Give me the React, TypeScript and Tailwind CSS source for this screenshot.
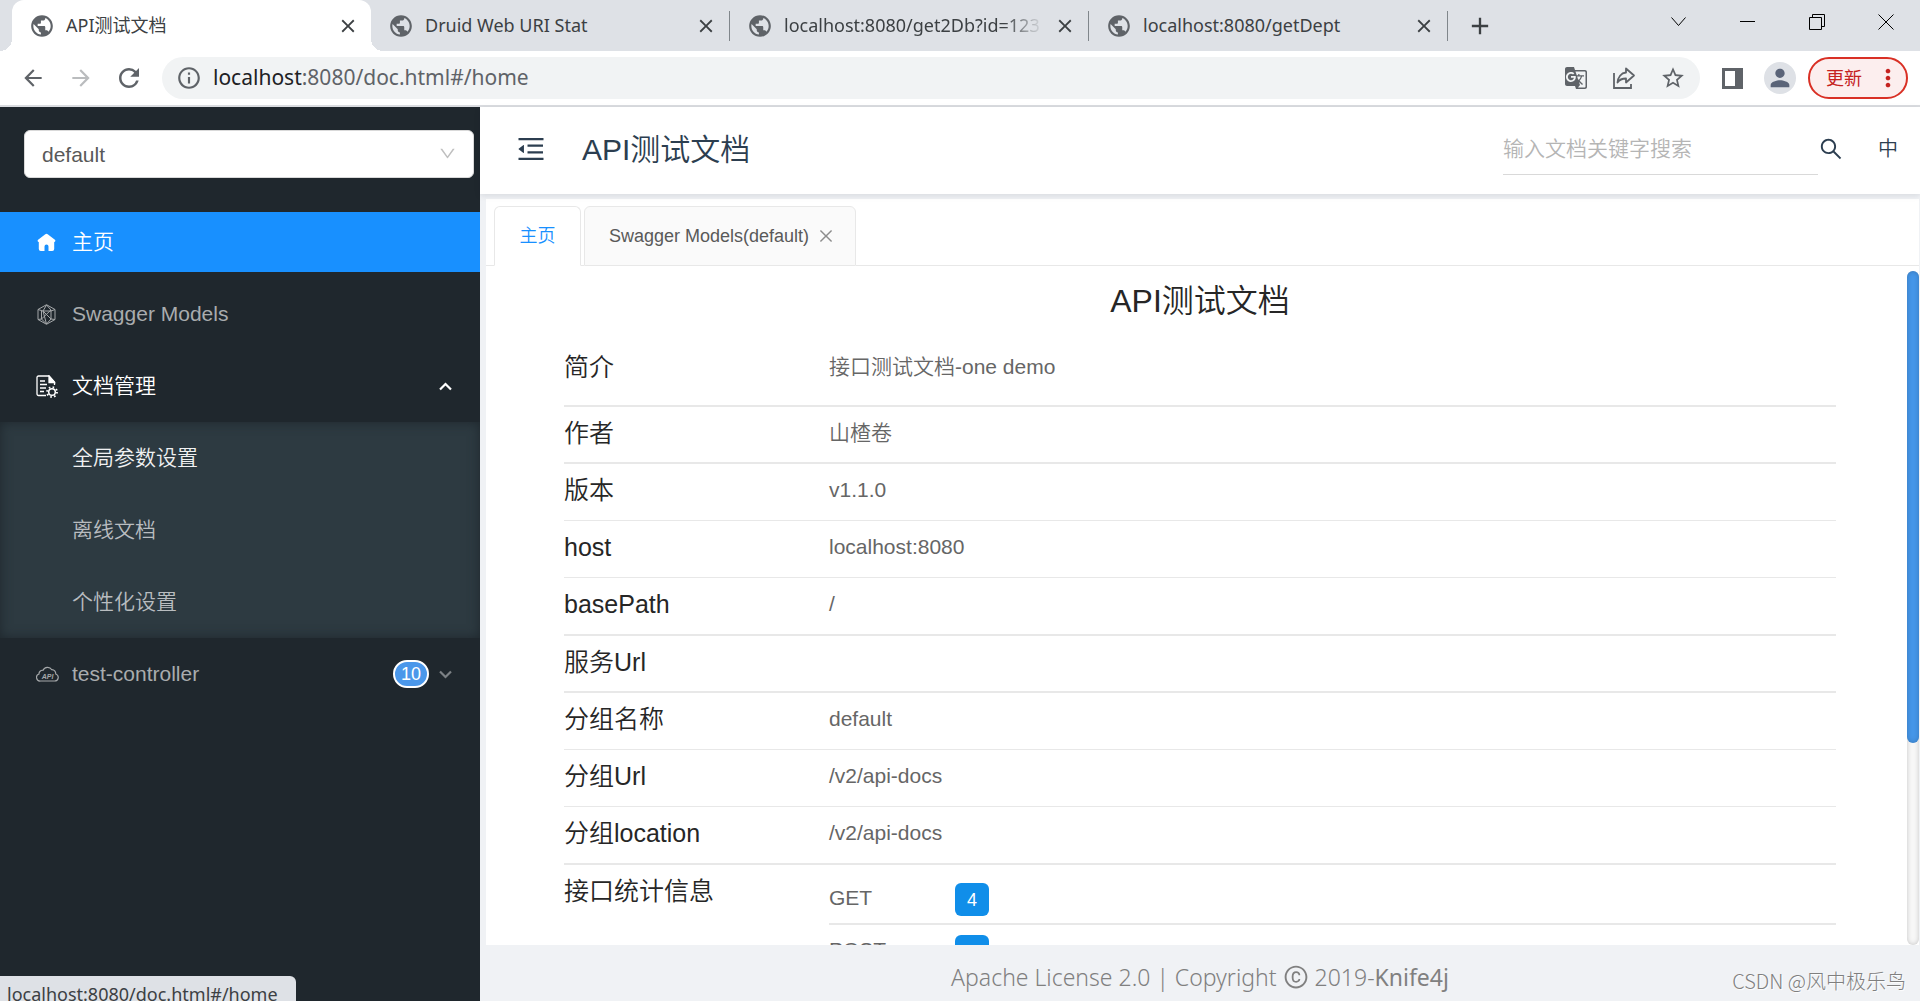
import React, { useState } from 'react';
import {
  MdArrowBack,
  MdArrowForward,
  MdClose,
  MdGTranslate,
  MdInfoOutline,
  MdMoreVert,
  MdPerson,
  MdPublic,
  MdRefresh,
  MdStarBorder,
  MdAdd,
} from 'react-icons/md';
import { AiOutlineClose, AiOutlineCopyright, AiOutlineDown, AiOutlineMenuFold, AiOutlineSearch } from 'react-icons/ai';

const BROWSER_TABS = ['API测试文档', 'Druid Web URI Stat', 'localhost:8080/get2Db?id=123', 'localhost:8080/getDept'];

const DOC_MENU = ['全局参数设置', '离线文档', '个性化设置'];

const DOC_INFO = [
  { label: '作者', value: '山楂卷', line: 'h-[57px] border-b-2' },
  { label: '版本', value: 'v1.1.0', line: 'h-[57px] border-b' },
  { label: 'host', value: 'localhost:8080', line: 'h-[57px] border-b' },
  { label: 'basePath', value: '/', line: 'h-[58px] border-b-2' },
  { label: '服务Url', value: '', line: 'h-[57px] border-b-2' },
  { label: '分组名称', value: 'default', line: 'h-[57px] border-b' },
  { label: '分组Url', value: '/v2/api-docs', line: 'h-[57px] border-b' },
  { label: '分组location', value: '/v2/api-docs', line: 'h-[58px] border-b-2' },
];

const METHOD_COUNTS = [
  { method: 'GET', count: 4 },
  { method: 'POST', count: 6 },
];

const ShareIcon = () => (
  <svg width="24" height="24" viewBox="0 0 24 24" fill="none" stroke="#5f6368" strokeWidth="1.8">
    <path d="M2 7v15h17v-4" />
    <path d="M14 2.5l8 7-8 7v-4c-4 0-6.500 1-8.500 4 .5-5 3.500-9.500 8.500-10z" strokeLinejoin="round" />
  </svg>
);

const HomeIcon = () => (
  <svg width="21" height="21" viewBox="0 0 21 21" fill="#fff">
    <path d="M9.300 2.200a2 2 0 0 1 2.400 0l7.200 5.600c1 .8.500 2.100-.7 2.100v7.100a2 2 0 0 1-2 2h-3.700v-4.500a2 2 0 0 0-4 0V19H4.800a2 2 0 0 1-2-2V9.900c-1.200 0-1.700-1.300-.7-2.100z" />
  </svg>
);

const ModelsIcon = () => (
  <svg width="21" height="21" viewBox="0 0 21 21" fill="none" stroke="#a5a8aa" strokeWidth="1">
    <path d="M10.500.700l8.500 4.800v10l-8.500 4.800L2 15.500v-10z" />
    <path d="M2 5.500l5 1.500h8l4-1.500M5.500 7v8M15 6v9M5.500 15L15 6M7 7l8 8 4 .5M10.500 1L7 7l3.500 13M10.500 1L15 6M5.500 15L2 15.500M5.500 15l5 5 4.500-5" />
  </svg>
);

const DocSettingsIcon = () => (
  <svg width="23" height="23" viewBox="0 0 23 23" fill="none" stroke="#fff" strokeWidth="1.300">
    <path d="M10 20.500H2.500a1.500 1.500 0 0 1-1.500-1.500V2.500A1.500 1.500 0 0 1 2.500 1h10.500l5.500 6v3" />
    <path d="M13 1v6.500h5.500z" fill="#fff" />
    <path d="M4 6h5M4 9.500h7M4 13h6M4 16.500h4" />
    <circle cx="16" cy="17" r="3.300" strokeWidth="1.500" />
    <circle cx="16" cy="17" r="5" strokeWidth="1.800" strokeDasharray="1.600 2.330" />
  </svg>
);

const CloudApiIcon = () => (
  <svg width="23" height="18" viewBox="0 0 23 18">
    <path
      d="M4.500 16h14a3.600 3.600 0 0 0 1.300-7 4.500 4.500 0 0 0-4-4.300A5 5 0 0 0 7 5.300 3.500 3.500 0 0 0 3 9a3.600 3.600 0 0 0 1.500 7z"
      fill="none"
      stroke="#a5a8aa"
      strokeWidth="1.200"
    />
    <text x="11.500" y="13.500" fontSize="7" fontWeight="700" fontStyle="italic" textAnchor="middle" fill="#a5a8aa">
      API
    </text>
  </svg>
);

const BrowserChrome: React.FC = () => (
  <div className="shrink-0 font-['Noto_Sans','Noto_Sans_CJK_SC',sans-serif] font-normal">
    {/* Tab strip */}
    <div className="flex h-[51px] bg-[#dee1e6] pl-3 text-[#3c4043]">
      {BROWSER_TABS.map((title, i) => (
        <div key={title} className={`relative flex w-[359px] items-center ${i === 0 ? 'rounded-t-xl bg-white' : ''}`}>
          {i === 0 && (
            <>
              <span className="absolute bottom-0 -left-3 h-3 w-3 bg-[radial-gradient(circle_at_top_left,transparent_12px,#fff_12px)]" />
              <span className="absolute bottom-0 -right-3 h-3 w-3 bg-[radial-gradient(circle_at_top_right,transparent_12px,#fff_12px)]" />
            </>
          )}
          <div className="flex h-[51px] min-w-0 flex-1 items-center gap-[11px] pl-[17px]">
            <MdPublic className="h-[26px] w-[26px] shrink-0 text-[#5f6368]" />
            <span
              className={`min-w-0 flex-1 overflow-hidden whitespace-nowrap text-[18px] ${
                i === 2 ? '[mask-image:linear-gradient(to_right,#000_85%,transparent)]' : ''
              }`}
            >
              {title}
            </span>
            <button aria-label="关闭标签页" className="mr-3">
              <MdClose className="h-[22px] w-[22px]" />
            </button>
          </div>
          {i > 0 && <div className="h-[30px] w-px bg-[#80868b]" />}
        </div>
      ))}
      <button aria-label="新标签页" className="ml-[18px]">
        <MdAdd className="h-7 w-7" />
      </button>
      <div className="ml-auto flex h-[43px] items-center text-black">
        <button aria-label="搜索标签页" className="flex w-[69px] justify-center">
          <svg width="15" height="10" viewBox="0 0 15 10" fill="none" stroke="currentColor"><path d="M.5.500l7 8 7-8" /></svg>
        </button>
        <button aria-label="最小化" className="flex w-[69px] justify-center">
          <svg width="15" height="10" viewBox="0 0 15 10" stroke="currentColor"><path d="M0 4.500h15" /></svg>
        </button>
        <button aria-label="还原" className="flex w-[69px] justify-center">
          <svg width="16" height="16" viewBox="0 0 16 16" fill="none" stroke="currentColor"><path d="M.5 3.500h12v12H.5zM3.500 3.500v-3h12v12h-3" /></svg>
        </button>
        <button aria-label="关闭" className="flex w-[69px] justify-center">
          <svg width="16" height="16" viewBox="0 0 16 16" stroke="currentColor"><path d="M.5.500l15 15M15.500.500l-15 15" /></svg>
        </button>
      </div>
    </div>

    {/* Toolbar */}
    <div className="flex h-14 items-center border-b-2 border-[#dadce0] bg-white pl-5 pr-3 text-[#5f6368]">
      <button aria-label="后退"><MdArrowBack className="h-[26px] w-[26px]" /></button>
      <button aria-label="前进" className="ml-[22px] text-[#babcbe]"><MdArrowForward className="h-[26px] w-[26px]" /></button>
      <button aria-label="重新加载" className="ml-5"><MdRefresh className="h-[30px] w-[30px]" /></button>
      <div className="ml-[18px] flex h-[42px] flex-1 items-center rounded-full bg-[#f1f3f4] pl-[14px] pr-[14px]">
        <MdInfoOutline className="h-[26px] w-[26px]" />
        <div className="ml-[11px] flex-1 text-[21px]">
          <span className="text-[#202124]">localhost</span>:8080/doc.html#/home
        </div>
        <div className="flex items-center gap-6">
          <button aria-label="翻译此页"><MdGTranslate className="h-6 w-6" /></button>
          <button aria-label="分享"><ShareIcon /></button>
          <button aria-label="收藏"><MdStarBorder className="h-[26px] w-[26px]" /></button>
        </div>
      </div>
      <button aria-label="侧边栏" className="ml-[22px] h-[21px] w-[21px] border-[3px] border-r-[8px] border-[#5f6368]" />
      <button aria-label="用户" className="ml-[21px] flex h-8 w-8 items-center justify-center rounded-full bg-[#dee1e6]">
        <MdPerson className="h-7 w-7 text-[#5a6478]" />
      </button>
      <button className="ml-3 flex h-[42px] w-[100px] items-center justify-between rounded-full border-2 border-[#d93025] bg-[#fceeee] pl-4 pr-1 text-lg text-[#c5221f]">
        更新
        <MdMoreVert className="h-7 w-7" />
      </button>
    </div>
  </div>
);

const Sidebar: React.FC = () => (
  <aside className="flex w-1/4 shrink-0 flex-col bg-[#1f272d] text-[21px] text-[#a9acae]">
    <div className="relative mt-[23px] ml-6 mr-[6px] mb-7">
      <select
        aria-label="分组"
        className="block h-12 w-full appearance-none rounded-md border border-[#d9d9d9] bg-white pl-[17px] pt-[2px] text-[#595959] outline-none"
      >
        <option>default</option>
      </select>
      <AiOutlineDown className="pointer-events-none absolute right-[17px] top-[14px] h-[19px] w-[19px] text-[#bfbfbf]" />
    </div>
    <nav>
      <a href="#/home" className="my-[6px] flex h-[60px] items-center bg-[#1890ff] pl-9 text-white">
        <span className="flex w-9"><HomeIcon /></span>
        主页
      </a>
      <a href="#/models" className="flex h-[72px] items-center pl-9">
        <span className="flex w-9"><ModelsIcon /></span>
        Swagger Models
      </a>
      <button className="flex h-[72px] w-full items-center pl-9 pr-7 text-white">
        <span className="flex w-9"><DocSettingsIcon /></span>
        文档管理
        <svg className="ml-auto" width="13" height="9" viewBox="0 0 13 9" fill="none" stroke="currentColor" strokeWidth="2.200"><path d="M1 7.500l5.500-5.500L12 7.500" /></svg>
      </button>
      <div className="bg-[#2d3a41] shadow-[inset_0_0_12px_#1f272d]">
        {DOC_MENU.map((item, i) => (
          <a key={item} href="#/doc" className={`flex h-[72px] items-center pl-[72px] ${i === 0 ? 'text-[#f0f1f2]' : 'text-[#b9bdc0]'}`}>
            {item}
          </a>
        ))}
      </div>
      <button className="flex h-[72px] w-full items-center pl-9 pr-7">
        <span className="flex w-9"><CloudApiIcon /></span>
        test-controller
        <span className="ml-auto mr-[10px] flex h-7 w-9 items-center justify-center rounded-full border-2 border-white bg-[#4a97ea] text-lg text-white">
          10
        </span>
        <svg width="13" height="9" viewBox="0 0 13 9" fill="none" stroke="#7c8185" strokeWidth="2.200"><path d="M1 1.500L6.500 7 12 1.500" /></svg>
      </button>
    </nav>
  </aside>
);

const PageHeader: React.FC = () => (
  <header className="z-10 flex h-[87px] shrink-0 items-center bg-white pb-[3px] pl-[35px] pr-[22px] text-[#2c3e50] shadow-[0_2px_6px_rgba(0,21,41,0.1)]">
    <button aria-label="折叠菜单"><AiOutlineMenuFold className="h-8 w-8" /></button>
    <h1 className="ml-[35px] text-[30px]">API测试文档</h1>
    <div className="ml-auto flex items-center">
      <input
        type="text"
        aria-label="搜索"
        placeholder="输入文档关键字搜索"
        className="h-[52px] w-[315px] border-b border-[#d9d9d9] text-[21px] outline-none placeholder:text-[#b5b5b5]"
      />
      <button aria-label="搜索文档"><AiOutlineSearch className="h-[26px] w-[26px]" /></button>
      <button className="ml-[34px] text-[20px]">中</button>
    </div>
  </header>
);

const DocInfo: React.FC = () => (
  <div className="min-w-0 flex-1 overflow-hidden pl-[78px] pr-[71px]">
    <h2 className="mt-[10px] h-[66px] text-center text-[32px] leading-[50px] text-[#262626]">API测试文档</h2>
    <table className="w-full table-fixed border-collapse text-left leading-[38px]">
      <tbody>
        <tr className="h-16 border-b-2 border-[#e8e8e8] align-top">
          <th scope="row" className="w-[265px] pt-[6px] text-[25px] font-[350] text-[#262626]">简介</th>
          <td className="pt-[6px] text-[21px] text-[#666]">接口测试文档-one demo</td>
        </tr>
        {DOC_INFO.map((row) => (
          <tr key={row.label} className={`border-[#e8e8e8] align-top ${row.line}`}>
            <th scope="row" className="pt-[7px] text-[25px] font-[350] text-[#262626]">{row.label}</th>
            <td className="pt-[7px] text-[21px] text-[#666]">{row.value}</td>
          </tr>
        ))}
        <tr className="align-top">
          <th scope="row" className="pt-[7px] text-[25px] font-[350] text-[#262626]">接口统计信息</th>
          <td className="pt-2 text-[21px] text-[#666]">
            {METHOD_COUNTS.map((item) => (
              <div key={item.method} className="flex h-[52px] border-b-2 border-[#e8e8e8] pt-2">
                <span className="w-[126px] leading-[34px]">{item.method}</span>
                <span className="mt-[2px] flex h-[33px] w-[34px] items-center justify-center rounded-md bg-[#108ee9] text-lg text-white">
                  {item.count}
                </span>
              </div>
            ))}
          </td>
        </tr>
      </tbody>
    </table>
  </div>
);

export default function App() {
  const [tab, setTab] = useState('home');

  return (
    <div className="flex h-screen flex-col overflow-hidden font-['Liberation_Sans','Noto_Sans_CJK_SC',sans-serif] font-[350]">
      <BrowserChrome />
      <div className="flex min-h-0 flex-1">
        <Sidebar />
        <div className="flex min-w-0 flex-1 flex-col bg-[#f0f2f5]">
          <PageHeader />
          <main className="mt-[5px] ml-[6px] mr-px flex min-h-0 flex-1 flex-col bg-white">
            {/* Opened pages */}
            <div className="flex h-[67px] shrink-0 items-end pt-[7px] text-lg">
              <div className="h-px w-2 bg-[#e8e8e8]" />
              <button
                onClick={() => setTab('home')}
                className={`h-[60px] w-[87px] rounded-t-md border border-[#e8e8e8] ${
                  tab === 'home' ? 'border-b-white bg-white text-[#1890ff]' : 'bg-[#fafafa] text-[#595959]'
                }`}
              >
                主页
              </button>
              <div className="h-px w-[3px] bg-[#e8e8e8]" />
              <button
                onClick={() => setTab('models')}
                className={`flex h-[60px] w-[272px] items-center gap-2 rounded-t-md border border-[#e8e8e8] pl-6 ${
                  tab === 'models' ? 'border-b-white bg-white text-[#1890ff]' : 'bg-[#fafafa] text-[#595959]'
                }`}
              >
                Swagger Models(default)
                <AiOutlineClose className="h-[18px] w-[18px] text-[#8c8c8c]" />
              </button>
              <div className="h-px flex-1 bg-[#e8e8e8]" />
            </div>
            <div className="flex min-h-0 flex-1">
              <DocInfo />
              <div className="mt-[5px] w-3 shrink-0 rounded-full bg-[#f7f7f7] shadow-[inset_0_0_5px_rgba(0,0,0,0.2)]">
                <div className="h-[70%] rounded-full bg-[#4596e8] shadow-[inset_0_0_5px_rgba(0,0,0,0.2)]" />
              </div>
            </div>
          </main>
          <footer className="flex h-14 shrink-0 items-center pl-[14px] pr-[14px] font-['Noto_Sans','Noto_Sans_CJK_SC',sans-serif]">
            <div className="flex-1" />
            <div className="flex items-center pt-2 text-[23px] font-light text-[#808080]">
              Apache License 2.0 | Copyright
              <AiOutlineCopyright className="mx-[6px] h-[26px] w-[26px]" />
              2019-<a href="#/knife4j" className="font-normal text-[#808080]">Knife4j</a>
            </div>
            <div className="flex-1 pt-4 text-right font-['Noto_Sans_CJK_SC',sans-serif] text-[20px] font-light text-[#7f7f7f] [text-shadow:1px_1px_1px_#fff]">
              CSDN @风中极乐鸟
            </div>
          </footer>
        </div>
      </div>
      {/* Link target bubble */}
      <div className="fixed bottom-0 left-0 h-[25px] w-[296px] overflow-hidden rounded-tr-md bg-[#dee1e6] pl-[7px] pt-[2px] font-['Noto_Sans',sans-serif] text-[18px] font-normal leading-[32px] text-[#3c4043]">
        localhost:8080/doc.html#/home
      </div>
    </div>
  );
}
